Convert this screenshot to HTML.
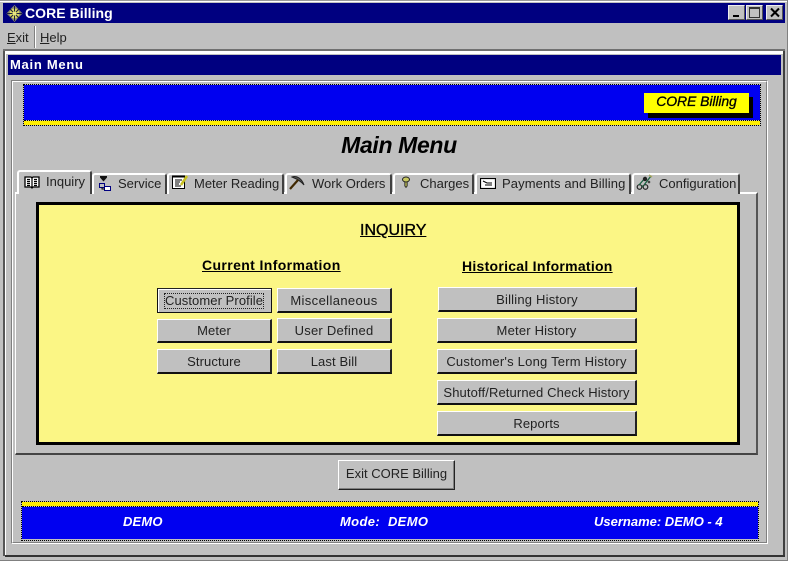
<!DOCTYPE html>
<html><head><meta charset="utf-8"><style>
html,body{margin:0;padding:0}
body{width:788px;height:561px;overflow:hidden;background:#c0c0c0;position:relative;font-family:"Liberation Sans",sans-serif;color:#111;font-size:13px}
div,svg,span.a{position:absolute;box-sizing:border-box}
.l{background:#fff}.d{background:#808080}.k{background:#000}
.t{white-space:nowrap;line-height:16px}
.tab{background:#c0c0c0;border-top:2px solid #fff;border-left:2px solid #fff;border-right:2px solid #404040;border-radius:3px 3px 0 0;height:21px}
.tab span{position:absolute;top:1px;white-space:nowrap;line-height:16px;font-size:13px;letter-spacing:0;color:#222}
.b{background:#c0c0c0;border-top:1.5px solid #fff;border-left:1.5px solid #fff;border-right:2px solid #222;border-bottom:2px solid #111;text-align:center;font-size:13px;line-height:21px;padding-top:1px;letter-spacing:.12px;color:#222;white-space:nowrap}
.wb{background:#c0c0c0;border-top:1px solid #eee;border-left:1px solid #eee;border-right:1px solid #555;border-bottom:1px solid #555;width:17px;height:15px;top:5px}
.dot{background:#c0c0c0;border:1px dotted #000}
</style></head><body>
<div class="l" style="left:0;top:1px;width:788px;height:1px"></div>
<div style="left:0;top:0;width:788px;height:1px;background:#999"></div>
<div style="left:787px;top:0;width:1px;height:561px;background:#808080"></div>
<div style="left:0;top:560px;width:788px;height:1px;background:#808080"></div>

<!-- title bar -->
<div style="left:3px;top:3px;width:782px;height:20px;background:#000080"></div>
<svg style="left:6px;top:5px" width="17" height="17" viewBox="0 0 17 17"><path d="M8.500 0L12 3.500 16.500 8.500 12 13 8.500 17 5 13 .5 8.500 5 3.500Z" fill="#8a8a70"/><circle cx="8.500" cy="8.500" r="5" fill="#d8d860"/><path d="M8.500 1V16M1 8.500H16M4 4L13 13M13 4L4 13" stroke="#202040" stroke-width="1"/><circle cx="8.500" cy="8.500" r="2" fill="#e8e880"/></svg>
<div class="t" style="left:25px;top:5px;color:#fff;font-size:14px;font-weight:700;letter-spacing:.05px">CORE Billing</div>
<div class="wb" style="left:728px"><div class="k" style="left:4px;top:9px;width:6px;height:2px"></div></div>
<div class="wb" style="left:746px"><div style="left:2px;top:1px;width:11px;height:11px;border:1px solid #333;border-top-width:2px"></div></div>
<div class="wb" style="left:766px"><svg style="left:2px;top:1px" width="12" height="11"><path d="M2 1.500L10 9.500M10 1.500L2 9.500" stroke="#000" stroke-width="2"/></svg></div>

<!-- menu -->
<div class="t" style="left:7px;top:30px;font-size:13px;color:#222"><span style="text-decoration:underline">E</span>xit</div>
<div style="left:34px;top:26px;width:1px;height:22px;background:#808080"></div>
<div style="left:35px;top:26px;width:1px;height:22px;background:#fff"></div>
<div class="t" style="left:40px;top:30px;font-size:13px;color:#222"><span style="text-decoration:underline">H</span>elp</div>
<div style="left:3px;top:49px;width:782px;height:2px;background:#707070"></div>
<div style="left:3px;top:51px;width:782px;height:1px;background:#fff"></div>

<!-- mdi frame -->
<div style="left:3px;top:51px;width:2px;height:505px;background:#555"></div>
<div style="left:5px;top:52px;width:1px;height:503px;background:#fff"></div>
<div style="left:783px;top:51px;width:2px;height:505px;background:#404040"></div>
<div style="left:5px;top:555px;width:780px;height:2px;background:#333"></div>
<div style="left:5px;top:52px;width:778px;height:2px;background:#fff"></div>
<div style="left:8px;top:55px;width:773px;height:20px;background:#000080"></div>
<div class="t" style="left:10px;top:57px;color:#fff;font-size:13px;font-weight:700;letter-spacing:.72px">Main Menu</div>

<!-- inner panel -->
<div style="left:11px;top:80px;width:757px;height:464px;border:1px solid;border-color:#808080 #fff #fff #808080"></div>
<div style="left:12px;top:81px;width:755px;height:462px;border:1px solid;border-color:#fff #808080 #808080 #fff"></div>

<!-- header band -->
<div class="dot" style="left:23px;top:84px;width:738px;height:42px"></div>
<div style="left:24px;top:85px;width:736px;height:35px;background:#0000f0"></div>
<div style="left:24px;top:120px;width:736px;height:1px;border-top:1px dotted #000"></div>
<div style="left:24px;top:121px;width:736px;height:4px;background:#ffee00"></div>
<div class="k" style="left:648px;top:97px;width:105px;height:21px"></div>
<div style="left:644px;top:93px;width:105px;height:20px;background:#ffff00"></div>
<div class="t" style="left:644px;top:93px;width:105px;text-align:center;font-size:14px;font-style:italic;font-weight:400;letter-spacing:-.1px;color:#000;-webkit-text-stroke:.3px #000">CORE Billing</div>

<div class="t" style="left:0;top:131px;width:798px;text-align:center;font-size:23px;line-height:28px;font-style:italic;font-weight:700;letter-spacing:-.35px;color:#000">Main Menu</div>

<!-- tab panel -->
<div style="left:15px;top:192px;width:743px;height:263px;background:#c0c0c0;border-top:2px solid #fff;border-left:1px solid #fff;border-right:2px solid #555;border-bottom:2px solid #444"></div>

<div class="tab" style="left:92px;top:173px;width:75px"><span style="left:24px">Service</span></div>
<div class="tab" style="left:167px;top:173px;width:117px"><span style="left:25px">Meter Reading</span></div>
<div class="tab" style="left:285px;top:173px;width:107px"><span style="left:25px">Work Orders</span></div>
<div class="tab" style="left:393px;top:173px;width:81px"><span style="left:25px">Charges</span></div>
<div class="tab" style="left:475px;top:173px;width:156px"><span style="left:25px;letter-spacing:.1px">Payments and Billing</span></div>
<div class="tab" style="left:632px;top:173px;width:108px"><span style="left:25px">Configuration</span></div>
<div class="tab" style="left:17px;top:170px;width:75px;height:24px"><span style="left:27px;top:2px">Inquiry</span></div>

<!-- tab icons -->
<svg style="left:24px;top:175px" width="16" height="14"><path d="M1 2H7L8 3 9 2H15V12H9L8 13 7 12H1Z" fill="#fff" stroke="#000" stroke-width="1.300"/><path d="M8 3V13M3 4.500H6M3 6.500H6M3 8.500H6M3 10.500H6M10 4.500H13M10 6.500H13M10 8.500H13M10 10.500H13" stroke="#000" stroke-width="1.200"/></svg>
<svg style="left:99px;top:176px" width="12" height="15"><path d="M1 0H8V1.500L4.500 5.500 1 1.500Z" fill="#111"/><rect x=".5" y="7.500" width="5" height="4" fill="#c0c0c0" stroke="#000080"/><rect x="5.500" y="10.500" width="6" height="4" fill="#fff" stroke="#000080"/><path d="M3 11.500V13H5.500" stroke="#000" fill="none"/></svg>
<svg style="left:172px;top:175px" width="17" height="15"><rect x=".5" y="1.500" width="12" height="12" fill="#fff" stroke="#000"/><path d="M0 1.500H13" stroke="#000" stroke-width="2"/><path d="M3 5H10M3 7H8M3 9H7M3 11H9" stroke="#000"/><path d="M9 10L15 1" stroke="#c8c020" stroke-width="2.500"/></svg>
<svg style="left:289px;top:175px" width="18" height="16"><path d="M3 2C8 0 13 4 15 10 12 6 8 4 3 2Z" fill="#555" stroke="#222"/><path d="M9 5L1 14" stroke="#402800" stroke-width="2.200"/></svg>
<svg style="left:400px;top:176px" width="12" height="14"><ellipse cx="6" cy="3.500" rx="3.500" ry="2.500" fill="#c8c860" stroke="#222"/><path d="M4.800 6H7.200V10L6 11.500 4.800 10Z" fill="#a8a850" stroke="#222" stroke-width=".8"/></svg>
<svg style="left:480px;top:178px" width="16" height="11"><rect x=".5" y=".5" width="15" height="10" fill="#fff" stroke="#000" stroke-width="1.200"/><path d="M3 3L7 5H12M5 7H12" stroke="#000" fill="none"/></svg>
<svg style="left:636px;top:174px" width="18" height="17"><circle cx="3.500" cy="13" r="2.300" fill="none" stroke="#222" stroke-width="1.200"/><circle cx="9.500" cy="13" r="2.300" fill="none" stroke="#222" stroke-width="1.200"/><path d="M5.500 12H7.500M3 11L10 3M8 11L15 2" stroke="#1a6040" stroke-width="1.300"/><circle cx="9" cy="5" r="2.200" fill="#222"/><circle cx="13" cy="8" r="1.300" fill="#444"/><path d="M13 1L16 3" stroke="#a8a860" stroke-width="1.500"/></svg>

<!-- yellow box -->
<div style="left:36px;top:202px;width:704px;height:243px;background:#fbf685;border:3px solid #000"></div>
<div class="t" style="left:360px;top:222px;font-size:16px;line-height:18px;text-decoration:underline;color:#000;-webkit-text-stroke:.35px #000">INQUIRY</div>
<div class="t" style="left:202px;top:257px;font-size:14px;font-weight:700;text-decoration:underline;letter-spacing:.38px;color:#000">Current Information</div>
<div class="t" style="left:462px;top:258px;font-size:14px;font-weight:700;text-decoration:underline;letter-spacing:.27px;color:#000">Historical Information</div>

<!-- buttons -->
<div class="b" style="left:157px;top:288px;width:115px;height:25px;border:1.500px solid #111;border-top-color:#222;box-shadow:inset 1px 1px 0 #fff;padding-top:0"><span class="a" style="left:6px;top:4px;width:100px;height:16px;line-height:14px;border:1px dotted #222;letter-spacing:.08px">Customer Profile</span></div>
<div class="b" style="left:277px;top:288px;width:115px;height:25px;letter-spacing:.38px">Miscellaneous</div>
<div class="b" style="left:157px;top:319px;width:115px;height:24px;padding-top:0">Meter</div>
<div class="b" style="left:277px;top:318px;width:115px;height:25px;letter-spacing:.25px">User Defined</div>
<div class="b" style="left:157px;top:349px;width:115px;height:25px">Structure</div>
<div class="b" style="left:277px;top:349px;width:115px;height:25px">Last Bill</div>

<div class="b" style="left:438px;top:287px;width:199px;height:25px;letter-spacing:.2px">Billing History</div>
<div class="b" style="left:437px;top:318px;width:200px;height:25px;letter-spacing:.2px">Meter History</div>
<div class="b" style="left:437px;top:349px;width:200px;height:25px;letter-spacing:.22px">Customer's Long Term History</div>
<div class="b" style="left:437px;top:380px;width:200px;height:25px">Shutoff/Returned Check History</div>
<div class="b" style="left:437px;top:411px;width:200px;height:25px">Reports</div>

<div class="b" style="left:338px;top:460px;width:117px;height:30px;border-width:1px;border-color:#fff #222 #222 #fff;box-shadow:inset -1px -1px 0 #808080;line-height:26px;padding-top:0;letter-spacing:0">Exit CORE Billing</div>

<!-- bottom band -->
<div class="dot" style="left:21px;top:501px;width:738px;height:40px"></div>
<div style="left:22px;top:502px;width:736px;height:4px;background:#ffee00"></div>
<div style="left:22px;top:506px;width:736px;height:1px;border-top:1px dotted #000"></div>
<div style="left:22px;top:507px;width:736px;height:32px;background:#0000f0"></div>
<div class="t" style="left:123px;top:514px;color:#fff;font-size:13px;font-weight:700;font-style:italic;letter-spacing:.15px">DEMO</div>
<div class="t" style="left:340px;top:514px;color:#fff;font-size:13px;font-weight:700;font-style:italic;letter-spacing:.35px;white-space:pre">Mode:  DEMO</div>
<div class="t" style="left:594px;top:514px;color:#fff;font-size:13px;font-weight:700;font-style:italic;letter-spacing:0">Username: DEMO - 4</div>
</body></html>
